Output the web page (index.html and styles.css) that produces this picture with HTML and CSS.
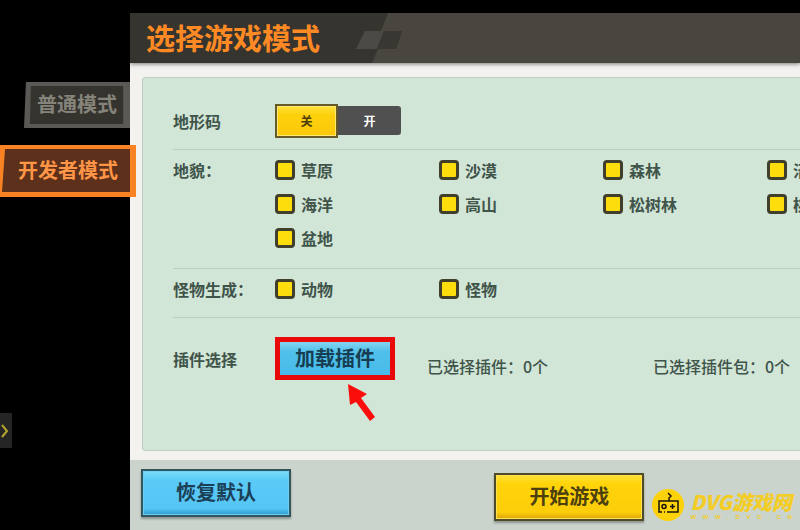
FILE: index.html
```
<!DOCTYPE html>
<html lang="zh-CN">
<head>
    <meta charset="UTF-8">
    <meta name="viewport" content="width=device-width, initial-scale=1.0">
    <title>选择游戏模式</title>
    <link rel="stylesheet" href="styles.css">
</head>
<body>
    <nav class="sidebar">
        <button type="button" class="tab">
            <svg class="tab-frame" viewBox="0 0 108 47" preserveAspectRatio="none" aria-hidden="true">
                <path d="M2 0H108V46H0Z" fill="#5a5955"/>
                <path d="M7 4H101V42H6Z" fill="#35332d"/>
            </svg>
            <span>普通模式</span>
        </button>
        <button type="button" class="tab tab-active">
            <svg class="tab-frame" viewBox="0 0 136 52" preserveAspectRatio="none" aria-hidden="true">
                <path d="M0 0H136V52H0Z" fill="#f98324"/>
                <path d="M5 4H130V47H2Z" fill="#5c301a"/>
            </svg>
            <span>开发者模式</span>
        </button>
    </nav>

    <main class="dialog">
        <header class="dialog-header">
            <h1>选择游戏模式</h1>
            <svg class="header-pattern" viewBox="0 0 60 50" aria-hidden="true">
                <path d="M32 0H60V50H16L22 36H40L46 18H25Z" fill="#494640"/>
                <path d="M9 18H28L21 36H0Z" fill="#4b4a44"/>
                <path d="M28 18H46L40 36H21Z" fill="#383732"/>
            </svg>
            <div class="header-fill"></div>
        </header>

        <div class="dialog-body">
            <section class="panel">
                <div class="row row-code">
                    <span class="row-label">地形码</span>
                    <div class="switch">
                        <button type="button" class="switch-off">关</button>
                        <button type="button" class="switch-on">开</button>
                    </div>
                </div>

                <div class="row row-terrain">
                    <span class="row-label">地貌：</span>
                    <div class="options">
                        <label class="option"><input type="checkbox" checked>草原</label>
                        <label class="option"><input type="checkbox" checked>沙漠</label>
                        <label class="option"><input type="checkbox" checked>森林</label>
                        <label class="option"><input type="checkbox" checked>沼泽</label>
                        <label class="option"><input type="checkbox" checked>海洋</label>
                        <label class="option"><input type="checkbox" checked>高山</label>
                        <label class="option"><input type="checkbox" checked>松树林</label>
                        <label class="option"><input type="checkbox" checked>桃树林</label>
                        <label class="option"><input type="checkbox" checked>盆地</label>
                    </div>
                </div>

                <div class="row row-mobs">
                    <span class="row-label">怪物生成：</span>
                    <div class="options">
                        <label class="option"><input type="checkbox" checked>动物</label>
                        <label class="option"><input type="checkbox" checked>怪物</label>
                    </div>
                </div>

                <div class="row row-plugins">
                    <span class="row-label">插件选择</span>
                    <div class="load">
                        <button type="button" class="load-button">加载插件</button>
                        <svg class="arrow" viewBox="0 0 30 40" aria-hidden="true">
                            <path d="M1 1L20 11L14 15L28 34L23 38L9 19L3 22Z" fill="#fb0d0b"/>
                        </svg>
                    </div>
                    <span class="count">已选择插件：0个</span>
                    <span class="count">已选择插件包：0个</span>
                </div>
            </section>
        </div>

        <footer class="dialog-footer">
            <button type="button" class="button button-blue">恢复默认</button>
            <button type="button" class="button button-yellow">开始游戏</button>
            <div class="brand">
                <svg class="brand-icon" viewBox="0 0 32 32" aria-hidden="true">
                    <circle cx="16" cy="16" r="16" fill="#fdd20b"/>
                    <g fill="none" stroke="#171409" stroke-width="1.5">
                        <path d="M10 23H7V12H26V23H15M12 23H13M17 12V9L19 7L16 4"/>
                        <circle cx="12" cy="17.500" r="2"/>
                        <path d="M18 17.500H23M20.500 15V20"/>
                    </g>
                </svg>
                <div class="brand-text">
                    <strong>DVG游戏网</strong>
                    <small><span>W</span><span>W</span><span>W</span><span>.</span><span>D</span><span>V</span><span>G</span><span>.</span><span>C</span><span>N</span></small>
                </div>
            </div>
        </footer>
    </main>

    <button type="button" class="drawer" aria-label="展开">
        <svg viewBox="0 0 12 34" aria-hidden="true">
            <path d="M2 11L7 17L2 23" fill="none" stroke="#b5a52c" stroke-width="2"/>
        </svg>
    </button>
</body>
</html>
```

FILE: styles.css
```
* {
    box-sizing: border-box;
    margin: 0;
    padding: 0;
}

body {
    position: relative;
    display: flex;
    min-height: 100vh;
    padding-top: 13px;
    overflow: hidden;
    background: #000;
    color: #40544a;
    font-family: "Noto Sans CJK SC", sans-serif;
    font-size: 16px;
    line-height: 24px;
}

button {
    border: none;
    background: none;
    color: inherit;
    font-family: inherit;
    cursor: pointer;
}

/* mode tabs */
.sidebar {
    position: relative;
    z-index: 1;
    display: flex;
    flex-direction: column;
    align-items: flex-end;
    gap: 16px;
    width: 130px;
    flex-shrink: 0;
    padding-top: 69px;
}

.tab {
    position: relative;
    width: 106px;
    height: 47px;
    padding-bottom: 3px;
    color: #85847b;
    font-size: 20px;
    font-weight: 700;
    line-height: 28px;
}

.tab-active {
    width: 136px;
    height: 52px;
    margin-right: -6px;
    color: #ff9547;
}

.tab-frame {
    position: absolute;
    inset: 0;
    width: 100%;
    height: 100%;
}

.tab span {
    position: relative;
}

/* dialog */
.dialog {
    display: flex;
    flex-direction: column;
    flex: 1;
    min-width: 0;
    overflow: hidden;
    background: #f3f2ef;
}

.dialog-header {
    position: relative;
    display: flex;
    align-items: center;
    height: 50px;
    padding-left: 16px;
    background: #35342f;
    box-shadow: 0 1px 4px rgba(0, 0, 0, 0.5);
}

.dialog-header h1 {
    padding-bottom: 2px;
    color: #ff8a24;
    font-size: 29px;
    font-weight: 700;
    line-height: 40px;
}

.header-pattern {
    width: 60px;
    height: 50px;
    flex-shrink: 0;
    margin-left: 36px;
}

.header-fill {
    flex: 1;
    height: 50px;
    background: #494640;
}

.dialog-body {
    display: flex;
    flex: 1;
    padding: 14px 0 9px 12px;
}

.panel {
    flex: 1;
    min-width: 0;
    padding: 12px 0 0 30px;
    border: 1px solid #bdcec2;
    border-right: none;
    border-radius: 4px 0 0 4px;
    background: #d2e6d8;
}

.row {
    display: flex;
    border-bottom: 1px solid #bccdc2;
}

.row-label {
    width: 102px;
    flex-shrink: 0;
    font-weight: 700;
    white-space: nowrap;
}

.row-code {
    align-items: center;
    height: 60px;
    padding-top: 2px;
}

.row-terrain {
    padding: 8px 0 18px;
}

.row-mobs {
    padding: 8px 0 16px;
}

.row-plugins {
    align-items: center;
    padding-top: 19px;
    border-bottom: none;
}

.switch {
    display: flex;
    align-items: center;
}

.switch-off {
    width: 63px;
    height: 34px;
    border: 2px solid #665b27;
    background: linear-gradient(#ffe23c, #fdd00c 30%, #fbc80b);
    color: #4d3d0c;
    font-size: 12px;
    font-weight: 700;
    box-shadow: inset 0 0 0 1px #ffe878;
}

.switch-on {
    width: 63px;
    height: 29px;
    border-radius: 0 3px 3px 0;
    background: #505050;
    color: #fff;
    font-size: 12px;
    font-weight: 700;
}

.options {
    display: grid;
    grid-template-columns: repeat(4, 164px);
    row-gap: 10px;
}

.option {
    display: flex;
    align-items: center;
    gap: 6px;
    font-weight: 700;
    white-space: nowrap;
}

.option input {
    appearance: none;
    width: 20px;
    height: 20px;
    border: 3px solid #403f2c;
    border-radius: 4px;
    background: #fff;
}

.option input:checked {
    background: #fddd0c;
}

.load {
    position: relative;
    margin-right: 32px;
}

.load-button {
    width: 120px;
    height: 43px;
    padding-bottom: 2px;
    border: 5px solid #e90909;
    background: linear-gradient(#86d4ef, #4fc0ec 30%, #49bbe8);
    color: #173d52;
    font-size: 20px;
    font-weight: 700;
    line-height: 28px;
}

/* pointer under the load button */
.arrow {
    position: absolute;
    top: 46px;
    left: 72px;
    width: 30px;
    height: 40px;
}

.count {
    width: 226px;
    flex-shrink: 0;
    padding-top: 14px;
    font-weight: 500;
    white-space: nowrap;
}

/* footer */
.dialog-footer {
    display: flex;
    align-items: flex-start;
    height: 70px;
    padding: 9px 8px 0 11px;
    background: #cbd3cd;
}

.button {
    width: 150px;
    height: 48px;
    flex-shrink: 0;
    padding-bottom: 2px;
    font-size: 20px;
    font-weight: 700;
    line-height: 28px;
}

.button-blue {
    border: 2px solid #32555e;
    background: linear-gradient(#7bdcf9, #5bcaf7 20%, #55c5f5 85%, #2f9ac9);
    color: #1b4056;
    box-shadow: inset 0 0 0 1px #6cd0f5, 0 2px 2px rgba(0, 0, 0, 0.3);
}

.button-yellow {
    margin: 4px 8px 0 auto;
    border: 2px solid #504b27;
    background: linear-gradient(#ffe238, #ffd409 20%, #fccd0a 85%, #d9a40b);
    color: #4c400f;
    box-shadow: inset 0 0 0 1px #ffe052, 0 2px 2px rgba(0, 0, 0, 0.3);
}

.brand {
    display: flex;
    align-items: center;
    gap: 6px;
    padding-top: 20px;
    color: #f3cd25;
}

.brand-icon {
    width: 32px;
    height: 32px;
    flex-shrink: 0;
}

.brand-text strong {
    display: block;
    font-size: 20px;
    font-style: italic;
    font-weight: 900;
    line-height: 24px;
    white-space: nowrap;
}

.brand-text small {
    display: flex;
    justify-content: space-between;
    font-family: "Liberation Sans", sans-serif;
    font-size: 6px;
    font-weight: 700;
    line-height: 6px;
}

/* side drawer handle */
.drawer {
    position: absolute;
    top: 413px;
    left: 0;
    width: 12px;
    height: 35px;
    background: #252525;
}

.drawer svg {
    display: block;
    width: 12px;
    height: 34px;
}
```
